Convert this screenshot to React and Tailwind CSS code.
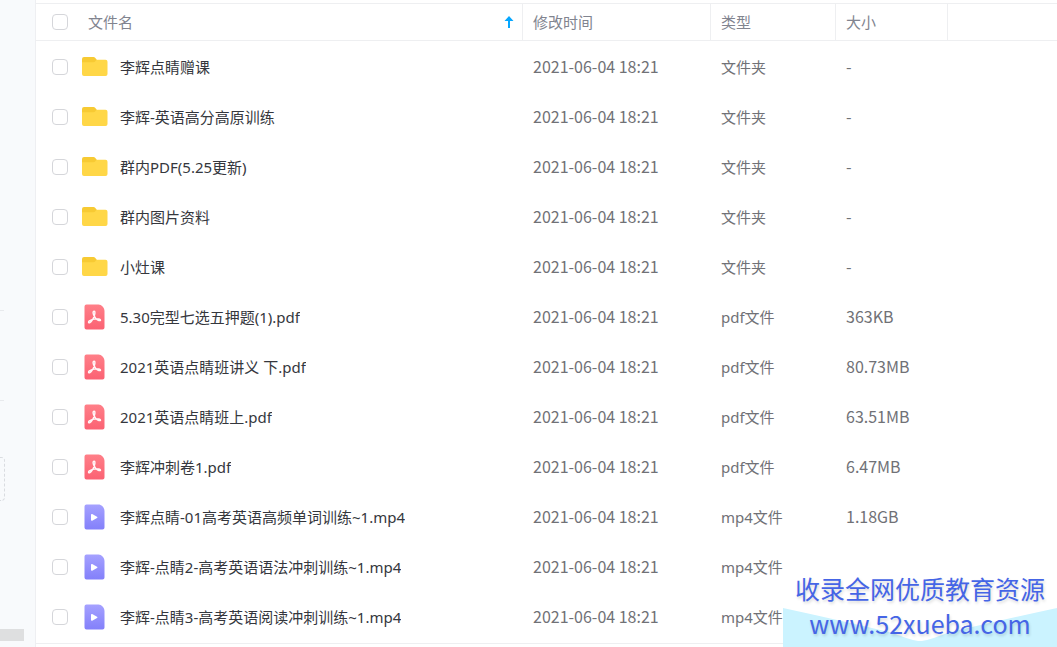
import { useState } from "react";

const FECHA = "2021-06-04 18:21";

const archivos = [
  { id: 1, nombre: "李辉点睛赠课", tipo: "folder", tamano: "-" },
  { id: 2, nombre: "李辉-英语高分高原训练", tipo: "folder", tamano: "-" },
  { id: 3, nombre: "群内PDF(5.25更新)", tipo: "folder", tamano: "-" },
  { id: 4, nombre: "群内图片资料", tipo: "folder", tamano: "-" },
  { id: 5, nombre: "小灶课", tipo: "folder", tamano: "-" },
  { id: 6, nombre: "5.30完型七选五押题(1).pdf", tipo: "pdf", tamano: "363KB" },
  { id: 7, nombre: "2021英语点睛班讲义 下.pdf", tipo: "pdf", tamano: "80.73MB" },
  { id: 8, nombre: "2021英语点睛班上.pdf", tipo: "pdf", tamano: "63.51MB" },
  { id: 9, nombre: "李辉冲刺卷1.pdf", tipo: "pdf", tamano: "6.47MB" },
  { id: 10, nombre: "李辉点睛-01高考英语高频单词训练~1.mp4", tipo: "mp4", tamano: "1.18GB" },
  { id: 11, nombre: "李辉-点睛2-高考英语语法冲刺训练~1.mp4", tipo: "mp4", tamano: "" },
  { id: 12, nombre: "李辉-点睛3-高考英语阅读冲刺训练~1.mp4", tipo: "mp4", tamano: "" },
];

const etiquetas = {
  folder: "文件夹",
  pdf: "pdf文件",
  mp4: "mp4文件",
};

function FolderIcon() {
  return (
    <svg width="26" height="26" viewBox="0 0 26 26" aria-hidden="true">
      <path d="M0 5a2 2 0 0 1 2-2h9.500a2 2 0 0 1 1.600.800L15 6v6H0z" fill="#f7ca33" />
      <path d="M0 8.200h11.500c.8 0 1.300-.3 1.800-.9l.6-.7c.4-.5 1-.8 1.700-.8H23.500a2 2 0 0 1 2 2V20a2 2 0 0 1-2 2H2a2 2 0 0 1-2-2z" fill="#ffd747" />
    </svg>
  );
}

function PdfIcon() {
  return (
    <svg width="26" height="26" viewBox="0 0 26 26" aria-hidden="true">
      <defs>
        <linearGradient id="pdfFill" x1="0" y1="0" x2="0" y2="1">
          <stop offset="0" stopColor="#ff7f88" />
          <stop offset="1" stopColor="#fb6273" />
        </linearGradient>
      </defs>
      <path d="M2.500 2.500a2 2 0 0 1 2-2h12c3 0 6 3 6 6.500v16.500a2 2 0 0 1-2 2h-16a2 2 0 0 1-2-2z" fill="url(#pdfFill)" />
      <path
        d="M11.600 7.300c1.700-.6 1.500 1.900.8 4.200-.9 2.900-2.700 6-4.800 7.300-1.200.5-1.500-1-.3-1.900 2.400-1.600 6.600-2.300 9.700-1.900 2.100.4 2 2-.1 1.500-2-.6-4-2.800-5-5-.7-1.600-1.100-3.700-.3-4.200z"
        fill="none"
        stroke="#fff"
        strokeOpacity=".95"
        strokeWidth="1.400"
        strokeLinejoin="round"
      />
    </svg>
  );
}

function VideoIcon() {
  return (
    <svg width="26" height="26" viewBox="0 0 26 26" aria-hidden="true">
      <defs>
        <linearGradient id="videoFill" x1="0" y1="0" x2="0" y2="1">
          <stop offset="0" stopColor="#a5a1ff" />
          <stop offset="1" stopColor="#8380fa" />
        </linearGradient>
      </defs>
      <path d="M2.500 2.500a2 2 0 0 1 2-2h12c3 0 6 3 6 6.500v16.500a2 2 0 0 1-2 2h-16a2 2 0 0 1-2-2z" fill="url(#videoFill)" />
      <path d="M9 10.800c0-.8.600-1.100 1.200-.8l4.800 2.800c.6.400.6 1 0 1.300l-4.800 2.600c-.6.300-1.200 0-1.200-.7z" fill="#fff" />
    </svg>
  );
}

const iconos = {
  folder: FolderIcon,
  pdf: PdfIcon,
  mp4: VideoIcon,
};

function Checkbox({ label, checked, onChange }) {
  return (
    <input
      type="checkbox"
      aria-label={label}
      checked={checked}
      onChange={onChange}
      className="block size-4 shrink-0 appearance-none rounded border border-[#d5d6da] bg-white checked:border-[#06a7ff] checked:bg-[#06a7ff]"
    />
  );
}

function Sidebar() {
  return (
    <aside className="w-9 shrink-0 border-r border-[#eeeff2] bg-[#f8fafc]">
      <div className="mt-[310px] w-1 border-t border-[#e8eaed]"></div>
      <div className="mt-[89px] w-1 border-t border-[#e8eaed]"></div>
      <div className="mt-14 h-11 w-[5px] rounded-r border-y border-r border-dashed border-[#d9dce0]"></div>
      <div className="mt-32 h-3 w-6 bg-[#dedfe0]"></div>
    </aside>
  );
}

function FileRow({ archivo, checked, onToggle }) {
  const Icono = iconos[archivo.tipo];

  return (
    <tr className="h-[50px]">
      <td className="pt-0.5 pl-4">
        <div className="flex items-center">
          <Checkbox label={archivo.nombre} checked={checked} onChange={onToggle} />
          <span className="ml-3.5 shrink-0">
            <Icono />
          </span>
          <span className="ml-3 truncate text-[15px] leading-6 text-[#35373d]">{archivo.nombre}</span>
        </div>
      </td>
      <td className="pl-2.5 font-['Noto_Sans_CJK_SC',sans-serif] text-base text-[#707176]">{FECHA}</td>
      <td className="pt-0.5 pl-2.5">{etiquetas[archivo.tipo]}</td>
      <td className="pl-2.5 font-['Noto_Sans_CJK_SC',sans-serif] text-base text-[#707176]">{archivo.tamano}</td>
      <td></td>
    </tr>
  );
}

function Banner() {
  return (
    <a
      href="#"
      className="absolute right-0 bottom-0 w-[274px] bg-white pt-2 pb-1.5 text-center font-['Noto_Sans_CJK_SC',sans-serif] text-[25px] leading-[35px] text-[#4565e6]"
    >
      <svg
        viewBox="0 0 274 40"
        preserveAspectRatio="none"
        aria-hidden="true"
        className="absolute bottom-0 left-0 h-10 w-full"
      >
        <path d="M0 1Q60 14 110 26Q130 34 137 34Q144 34 164 26Q214 14 274 1V40H0z" fill="#cbf3ff" />
      </svg>
      <span className="relative block text-shadow-[1px_2px_3px_rgb(0_0_0_/_0.15)]">收录全网优质教育资源</span>
      <span className="relative block text-shadow-[1px_2px_3px_rgb(0_0_0_/_0.15)]">www.52xueba.com</span>
    </a>
  );
}

export default function App() {
  const [seleccionados, setSeleccionados] = useState([]);
  const todos = seleccionados.length === archivos.length;

  const alternar = (id) => {
    setSeleccionados((prev) => (prev.includes(id) ? prev.filter((x) => x !== id) : [...prev, id]));
  };

  return (
    <div className="relative flex min-h-screen bg-white font-['Noto_Sans','Noto_Sans_CJK_SC',sans-serif] text-[15px] text-[#707176]">
      <Sidebar />

      <main className="min-w-0 flex-1 pt-[3px]">
        <table className="w-full table-fixed border-separate border-spacing-0 text-left">
          <colgroup>
            <col />
            <col className="w-[188px]" />
            <col className="w-[125px]" />
            <col className="w-[112px]" />
            <col className="w-[109px]" />
          </colgroup>
          <thead>
            <tr className="h-[38px] text-[#81848f] *:border-y *:border-[#eeeff1] *:font-normal">
              <th className="border-r pl-4">
                <div className="flex items-center">
                  <Checkbox
                    label="全选"
                    checked={todos}
                    onChange={() => setSeleccionados(todos ? [] : archivos.map((a) => a.id))}
                  />
                  <button className="ml-5 flex flex-1 items-center justify-between pr-2">
                    文件名
                    <svg width="10" height="12" viewBox="0 0 10 12" aria-hidden="true">
                      <path d="M5 0L9.500 5H6v7H4V5H.500z" fill="#06a7ff" />
                    </svg>
                  </button>
                </div>
              </th>
              <th className="border-r pl-2.5">修改时间</th>
              <th className="border-r pl-2.5">类型</th>
              <th className="border-r pl-2.5">大小</th>
              <th></th>
            </tr>
          </thead>
          <tbody>
            {archivos.map((archivo) => (
              <FileRow
                key={archivo.id}
                archivo={archivo}
                checked={seleccionados.includes(archivo.id)}
                onToggle={() => alternar(archivo.id)}
              />
            ))}
          </tbody>
        </table>
        <div className="mt-0.5 border-t border-[#eeeff1]"></div>
      </main>

      <Banner />
    </div>
  );
}
